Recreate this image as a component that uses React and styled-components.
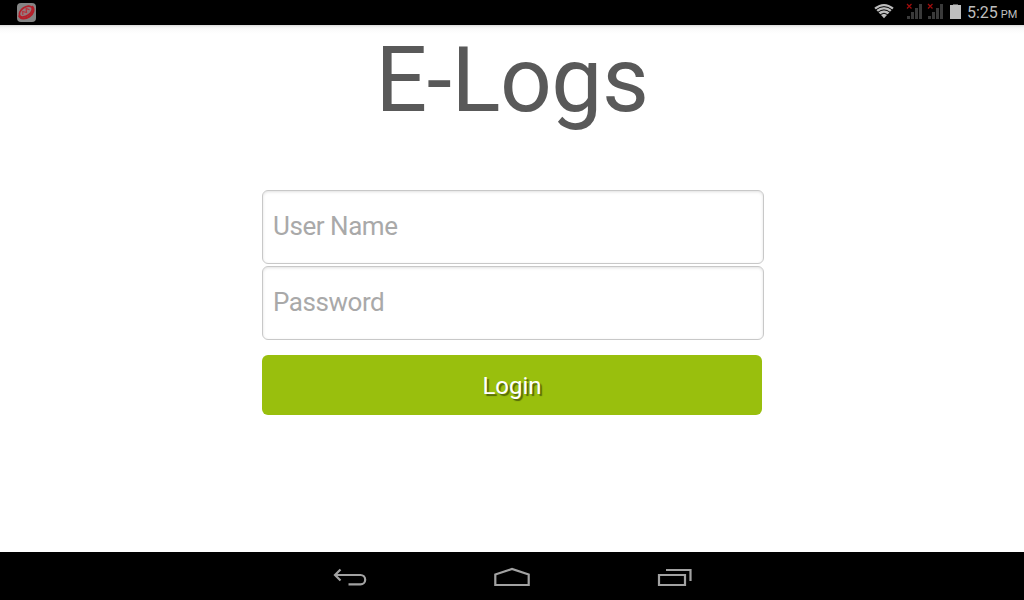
import React from "react"
import styled, { createGlobalStyle } from "styled-components"

const GlobalStyle = createGlobalStyle`
  * {
    box-sizing: border-box;
  }

  body {
    margin: 0;
    background: white;
    font-family: Roboto, "Liberation Sans", sans-serif;
  }
`

const Screen = styled.div`
  display: flex;
  flex-direction: column;
  width: 1024px;
  height: 600px;
  overflow: hidden;
`

const StatusBar = styled.header`
  display: flex;
  flex: none;
  justify-content: space-between;
  height: 25px;
  background: black;

  svg {
    display: block;
  }
`

const StatusIcons = styled.div`
  display: flex;
`

const Clock = styled.div`
  width: 57px;
  color: #bebebe;
  font-size: 16px;
  line-height: 26px;
  white-space: nowrap;

  small {
    margin-left: 3px;
    font-size: 11px;
  }
`

const Content = styled.main`
  display: flex;
  flex: 1;
  flex-direction: column;
  background: linear-gradient(#d8d8d8, #f3f3f3 2px, #fafafa 4px, white 9px);
`

const Title = styled.h1`
  height: 110px;
  margin: 0;
  color: #595959;
  font-size: 91px;
  font-weight: 400;
  letter-spacing: -0.5px;
  line-height: 110px;
  text-align: center;
`

const LoginForm = styled.form`
  display: flex;
  flex-direction: column;
  gap: 2px;
  width: 502px;
  margin: 55px 0 0 262px;
`

const Field = styled.input`
  width: 100%;
  height: 74px;
  padding: 0 10px 2px;
  border: 1px solid #c8c8c8;
  border-radius: 6px;
  outline: none;
  background: white;
  box-shadow: inset 0 1px 3px rgba(0, 0, 0, 0.12);
  color: #595959;
  font-family: inherit;
  font-size: 26px;
  letter-spacing: -0.45px;

  &::placeholder {
    color: #a9a9a9;
    opacity: 1;
  }
`

const LoginButton = styled.button`
  width: 500px;
  height: 60px;
  margin-top: 13px;
  padding: 2px 0 0;
  border: 0;
  border-radius: 6px;
  background: #99bf0d;
  color: white;
  font-family: inherit;
  font-size: 24px;
  text-shadow: 2px 2px 1px rgba(0, 0, 0, 0.45);
`

const NavBar = styled.nav`
  display: grid;
  flex: none;
  grid-template-columns: repeat(3, 162px);
  justify-content: center;
  justify-items: center;
  height: 48px;
  background: black;

  svg {
    display: block;
    fill: none;
    stroke: #a2a2a2;
    stroke-width: 2.2;
  }
`

const AppIcon = () => (
  <svg width="42" height="25" viewBox="0 0 42 25">
    <rect x="17" y="3" width="19" height="19" rx="4" fill="#858585" />
    <g fill="none" transform="rotate(-35 26.5 12.5)">
      <path
        d="M18.5 10.5c-1 4 3 7 8 7s9-3 8-7"
        stroke="#b51f2a"
        strokeWidth="2"
      />
      <ellipse cx="26.500" cy="11.300" rx="7.300" ry="4.300" fill="#967a7d" stroke="#b51f2a" strokeWidth="1.700" />
      <path d="M22 12.500l2-3 2.500 3 2-3.500 2 3" stroke="#b8323c" strokeWidth="1.200" />
    </g>
  </svg>
)

const SignalIcon = () => (
  <svg width="21" height="25" viewBox="0 0 21 25">
    <path
      d="M4 16h3v3H4zM8 12h3v7H8zM12 8h3v11h-3zM16 4h3v15h-3z"
      fill="#3a3a3a"
    />
    <path d="M4 4l4.500 4.500M8.500 4L4 8.500" stroke="#a00c0c" strokeWidth="1.200" />
  </svg>
)

const WifiIcon = () => (
  <svg width="31" height="25" viewBox="0 0 31 25">
    <path d="M2.300 7.800Q12 .1 21.700 7.800L12 18.300z" fill="#bebebe" />
    <g fill="none" stroke="black" strokeWidth="1">
      <path d="M4 9.700Q12 3.600 20 9.700" />
      <path d="M6 12.200Q12 7.600 18 12.200" />
      <path d="M8.200 14.700Q12 11.700 15.800 14.700" />
    </g>
  </svg>
)

const BatteryIcon = () => (
  <svg width="22" height="25" viewBox="0 0 22 25">
    <path d="M8 4h5v1H8z" fill="#666" />
    <path d="M5 5h11v14H5z" fill="#bebebe" />
  </svg>
)

export default function App() {
  return (
    <Screen>
      <GlobalStyle />
      <StatusBar>
        <AppIcon />
        <StatusIcons>
          <WifiIcon />
          <SignalIcon />
          <SignalIcon />
          <BatteryIcon />
          <Clock>
            5:25<small>PM</small>
          </Clock>
        </StatusIcons>
      </StatusBar>
      <Content>
        <Title>E-Logs</Title>
        <LoginForm>
          <Field type="text" placeholder="User Name" />
          <Field type="password" placeholder="Password" />
          <LoginButton type="button">Login</LoginButton>
        </LoginForm>
      </Content>
      <NavBar>
        <svg width="60" height="48" viewBox="0 0 60 48">
          <path d="M20.500 17.500L15 23l5.500 5.500M15.500 23H40.500a4.700 4.700 0 0 1 0 9.400H28.500" />
        </svg>
        <svg width="60" height="48" viewBox="0 0 60 48">
          <path d="M13.300 33V22.500L30 17l16.700 5.500V33z" />
        </svg>
        <svg width="60" height="48" viewBox="0 0 60 48">
          <path d="M15 23h26v10H15zM22 18h24.500v11" />
        </svg>
      </NavBar>
    </Screen>
  )
}
